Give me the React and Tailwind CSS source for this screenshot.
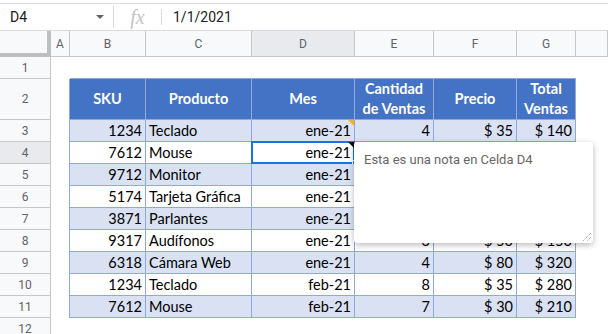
import React from "react";

const data = [
  ["1234", "Teclado", "ene-21", "4", "$ 35", "$ 140"],
  ["7612", "Mouse", "ene-21", "", "", ""],
  ["9712", "Monitor", "ene-21", "", "", ""],
  ["5174", "Tarjeta Gráfica", "ene-21", "", "", ""],
  ["3871", "Parlantes", "ene-21", "", "", ""],
  ["9317", "Audífonos", "ene-21", "3", "$ 50", "$ 150"],
  ["6318", "Cámara Web", "ene-21", "4", "$ 80", "$ 320"],
  ["1234", "Teclado", "feb-21", "8", "$ 35", "$ 280"],
  ["7612", "Mouse", "feb-21", "7", "$ 30", "$ 210"],
];

const letters = ["A", "B", "C", "D", "E", "F", "G", ""];

function RowHead({ n, sel }) {
  return (
    <div
      className={
        "flex items-center justify-center border-r border-b border-[#c7c7c7] text-[12px] text-[#5f6368] font-['Roboto',sans-serif] " +
        (sel ? "bg-[#e8eaed]" : "bg-[#f8f9fa]")
      }
    >
      {n}
    </div>
  );
}

export default function App() {
  return (
    <div className="relative w-[608px] h-[334px] overflow-hidden bg-white font-['Roboto',sans-serif]">
      {/* formula bar */}
      <div className="pt-[3px]">
        <div className="flex h-[28px] items-center border-t border-b border-[#dadce0] text-[14px] text-[#202124]">
          <div className="flex w-[113px] items-center pl-[10px] pr-[8px]">
            <span className="flex-1">D4</span>
            <svg width="8" height="4" viewBox="0 0 8 4" className="mr-[1px]">
              <path d="M0 0 L8 0 L4 4 Z" fill="#5f6368" />
            </svg>
          </div>
          <div className="h-[22px] w-px bg-[#dadce0]" />
          <div className="flex w-[47px] justify-center font-['Liberation_Serif',serif] text-[20px] italic text-[#c4c4c4] leading-none">
            fx
          </div>
          <div className="h-[16px] w-px bg-[#dadce0]" />
          <div className="pl-[11px]">1/1/2021</div>
        </div>
      </div>

      {/* grid */}
      <div className="grid grid-cols-[51px_19px_76px_106px_103px_79px_83px_59px_1fr] grid-rows-[26px_22px_41px_22px_22px_22px_22px_22px_22px_22px_22px_22px_22px]">
        {/* column header row */}
        <div className="bg-[#f8f9fa] border-r-4 border-b-4 border-[#bfbfbf]" />
        {letters.map((l, i) => (
          <div
            key={"h" + i}
            className={
              "flex items-center justify-center border-r border-b border-[#c7c7c7] text-[12px] text-[#5f6368] " +
              (l === "D" ? "bg-[#e8eaed]" : "bg-[#f8f9fa]")
            }
          >
            {l}
          </div>
        ))}

        {/* row 1 */}
        <RowHead n={1} />
        <div />
        {[0, 1, 2, 3, 4, 5].map((i) => (
          <div key={"r1" + i} className="border-b border-[#8eaadb]" />
        ))}
        <div />

        {/* row 2 header */}
        <RowHead n={2} />
        <div className="border-r border-[#8eaadb]" />
        {["SKU", "Producto", "Mes", "Cantidad de Ventas", "Precio", "Total Ventas"].map((t, i) => (
          <div
            key={"th" + i}
            className="flex items-center justify-center bg-[#4472c4] border-r border-b border-[#8eaadb] px-[2px] text-center font-['Lato',sans-serif] text-[14.5px] font-bold leading-[20px] text-white"
          >
            {t}
          </div>
        ))}
        <div />

        {/* data rows */}
        {data.map((r, ri) => {
          const n = ri + 3;
          const band = ri % 2 === 0 ? "bg-[#d9e1f2]" : "bg-white";
          return (
            <React.Fragment key={"row" + n}>
              <RowHead n={n} sel={n === 4} />
              <div className="border-r border-[#8eaadb]" />
              {r.map((v, ci) => (
                <div
                  key={"c" + n + ci}
                  className={
                    "relative flex items-end border-r border-b border-[#8eaadb] px-[3px] pb-[1px] font-['Lato',sans-serif] text-[14.5px] leading-[18px] text-black " +
                    band +
                    (ci === 1 ? " justify-start" : " justify-end")
                  }
                >
                  {v}
                  {ci === 2 && n === 3 && (
                    <span className="absolute right-0 top-0 h-0 w-0 border-l-[6px] border-t-[6px] border-l-transparent border-t-[#f6b026]" />
                  )}
                  {ci === 2 && n === 4 && (
                    <>
                      <span className="absolute -inset-px border-2 border-[#1a73e8]" />
                      <span className="absolute right-0 top-0 h-0 w-0 border-l-[6px] border-t-[6px] border-l-transparent border-t-black" />
                      <span className="absolute -bottom-[3px] -right-[3px] h-[6px] w-[5px] bg-[#1a73e8] border border-white" />
                    </>
                  )}
                </div>
              ))}
              <div />
            </React.Fragment>
          );
        })}

        {/* row 12 */}
        <RowHead n={12} />
      </div>

      {/* note popup */}
      <div className="absolute left-[354px] top-[142px] h-[101px] w-[239px] rounded-[3px] bg-white shadow-[0_2px_6px_rgba(0,0,0,0.28)]">
        <div className="pl-[10px] pt-[8px] text-[13px] text-[#666]">Esta es una nota en Celda D4</div>
        <svg className="absolute bottom-[1px] right-[1px]" width="10" height="10" viewBox="0 0 10 10">
          <path d="M9 1 L1 9 M9 5 L5 9" stroke="#888" strokeWidth="1" strokeDasharray="1 1" />
        </svg>
      </div>
    </div>
  );
}
